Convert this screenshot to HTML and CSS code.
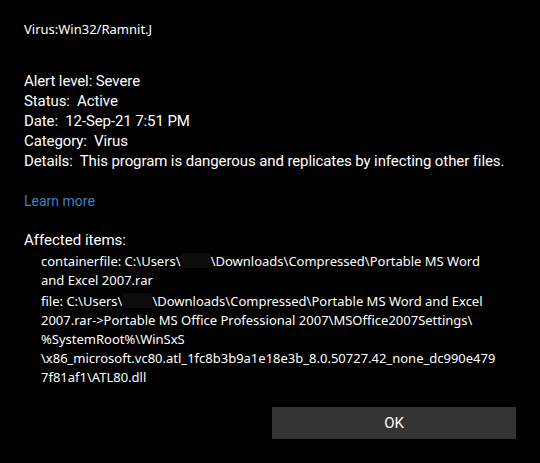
FILE: index.html
```html
<!DOCTYPE html>
<html lang="en">
<head>
    <meta charset="UTF-8">
    <meta name="viewport" content="width=device-width, initial-scale=1.0">
    <title>Threat details</title>
    <link rel="stylesheet" href="styles.css">
</head>
<body>
    <div class="dialog">
        <div class="threat-name">Virus:Win32/Ramnit.J</div>

        <div class="details">
            <div>Alert level: Severe</div>
            <div>Status:&nbsp; Active</div>
            <div>Date:&nbsp; 12-Sep-21 7:51 PM</div>
            <div>Category:&nbsp; Virus</div>
            <div>Details:&nbsp; This program is dangerous and replicates by infecting other files.</div>
        </div>

        <a class="learn-more" href="#">Learn more</a>

        <div class="affected">
            <div class="affected-label">Affected items:</div>
            <ul class="items">
                <li>containerfile: C:\Users\<span class="hidden-user"></span>\Downloads\Compressed\Portable MS Word<br>and Excel 2007.rar</li>
                <li>file: C:\Users\<span class="hidden-user"></span>\Downloads\Compressed\Portable MS Word and Excel<br>2007.rar-&gt;Portable MS Office Professional 2007\MSOffice2007Settings\<br>%SystemRoot%\WinSxS<br>\x86_microsoft.vc80.atl_1fc8b3b9a1e18e3b_8.0.50727.42_none_dc990e479<br>7f81af1\ATL80.dll</li>
            </ul>
        </div>

        <div class="actions">
            <button class="ok-button">OK</button>
        </div>
    </div>
</body>
</html>
```

FILE: styles.css
```css
body {
    margin: 0;
    background-color: #000;
    color: #fff;
    font-family: "Noto Sans", "Open Sans", sans-serif;
}
.dialog {
    padding: 20px 24px 0;
}
.threat-name {
    font-size: 13px;
    line-height: 18px;
}
.details {
    margin-top: 33px;
    font-family: Roboto, "Noto Sans", sans-serif;
    font-size: 15px;
    line-height: 20px;
    letter-spacing: -0.1px;
    white-space: nowrap;
}
.learn-more {
    display: block;
    margin-top: 20px;
    font-family: Roboto, "Noto Sans", sans-serif;
    font-size: 14px;
    line-height: 20px;
    color: #3f80c2;
    text-decoration: none;
}
.affected {
    margin-top: 19px;
}
.affected-label {
    font-family: Roboto, "Noto Sans", sans-serif;
    font-size: 15px;
    line-height: 20px;
}
.items {
    list-style: none;
    margin: 2px 0 0;
    padding: 0 0 0 17px;
    font-size: 13px;
    line-height: 19px;
}
.items li {
    white-space: nowrap;
    margin-bottom: 2px;
}
.hidden-user {
    display: inline-block;
    width: 30px;
    height: 15px;
    vertical-align: -2px;
    background-color: #0c0c0c;
}
.actions {
    display: flex;
    justify-content: flex-end;
    margin-top: 20px;
}
.ok-button {
    width: 244px;
    height: 32px;
    background-color: #333;
    color: #fff;
    border: none;
    font-family: Roboto, "Noto Sans", sans-serif;
    font-size: 15px;
    cursor: pointer;
}
```
